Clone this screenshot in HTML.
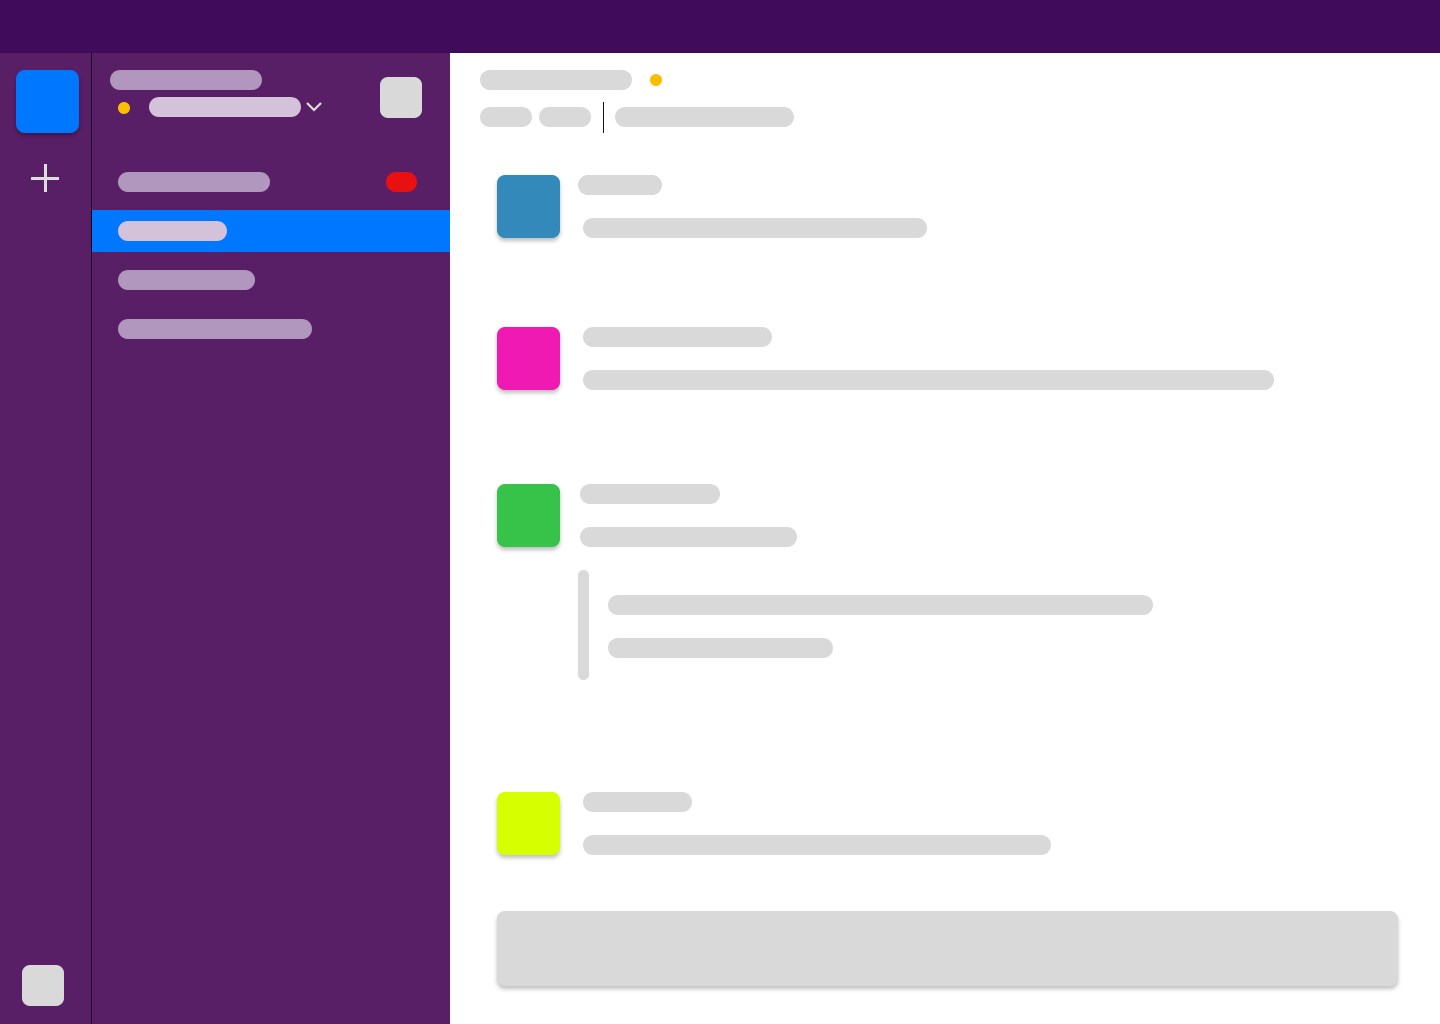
<!DOCTYPE html>
<html><head><meta charset="utf-8"><style>
*{margin:0;padding:0;box-sizing:border-box}
body{width:1440px;height:1024px;position:relative;overflow:hidden;background:#fff;font-family:"Liberation Sans",sans-serif}
div{position:absolute}
.p{height:20px;border-radius:10px;background:#d9d9d9}
.l{background:#b196be}
.w{background:#d4c1da}
.av{width:63px;height:63px;border-radius:8px;box-shadow:0 3px 4px rgba(0,0,0,.25)}
</style></head><body>
<div style="left:0;top:0;width:1440px;height:53px;background:#3f0b5a"></div>
<div style="left:0;top:53px;width:450px;height:971px;background:#591f66"></div>
<div style="left:91px;top:53px;width:1px;height:971px;background:#1a0520"></div>
<div style="left:16px;top:70px;width:63px;height:63px;border-radius:9px;background:#0077ff;box-shadow:0 3px 4px rgba(0,0,0,.3)"></div>
<div style="left:31px;top:177px;width:28px;height:3px;background:#ddd"></div>
<div style="left:44px;top:164px;width:3px;height:28px;background:#ddd"></div>
<div style="left:22px;top:965px;width:42px;height:41px;border-radius:8px;background:#d9d9d9"></div>

<div class="p l" style="left:110px;top:70px;width:152px"></div>
<div style="left:118px;top:102px;width:12px;height:12px;border-radius:50%;background:#fbbf00"></div>
<div class="p w" style="left:149px;top:97px;width:152px"></div>
<svg style="position:absolute;left:305px;top:101px" width="18" height="12"><path d="M2 2 L9 9 L16 2" stroke="#ddd" stroke-width="2.2" fill="none"/></svg>
<div style="left:380px;top:77px;width:42px;height:41px;border-radius:8px;background:#d9d9d9"></div>

<div class="p l" style="left:118px;top:172px;width:152px"></div>
<div class="p" style="left:386px;top:172px;width:31px;background:#e81010"></div>
<div style="left:92px;top:210px;width:358px;height:42px;background:#0077ff"></div>
<div class="p w" style="left:118px;top:221px;width:109px"></div>
<div class="p l" style="left:118px;top:270px;width:137px"></div>
<div class="p l" style="left:118px;top:319px;width:194px"></div>

<div class="p" style="left:480px;top:70px;width:152px"></div>
<div style="left:650px;top:74px;width:12px;height:12px;border-radius:50%;background:#fbbf00"></div>
<div class="p" style="left:480px;top:107px;width:52px"></div>
<div class="p" style="left:539px;top:107px;width:52px"></div>
<div style="left:603px;top:102px;width:1px;height:31px;background:#111"></div>
<div class="p" style="left:615px;top:107px;width:179px"></div>

<div class="av" style="left:497px;top:175px;background:#3289ba"></div>
<div class="p" style="left:578px;top:175px;width:84px"></div>
<div class="p" style="left:583px;top:218px;width:344px"></div>

<div class="av" style="left:497px;top:327px;background:#ef1ab1"></div>
<div class="p" style="left:583px;top:327px;width:189px"></div>
<div class="p" style="left:583px;top:370px;width:691px"></div>

<div class="av" style="left:497px;top:484px;background:#37c24a"></div>
<div class="p" style="left:580px;top:484px;width:140px"></div>
<div class="p" style="left:580px;top:527px;width:217px"></div>
<div style="left:578px;top:570px;width:11px;height:110px;border-radius:6px;background:#d9d9d9"></div>
<div class="p" style="left:608px;top:595px;width:545px"></div>
<div class="p" style="left:608px;top:638px;width:225px"></div>

<div class="av" style="left:497px;top:792px;background:#d6ff00"></div>
<div class="p" style="left:583px;top:792px;width:109px"></div>
<div class="p" style="left:583px;top:835px;width:468px"></div>

<div style="left:497px;top:911px;width:901px;height:75px;border-radius:8px;background:#d9d9d9;box-shadow:0 3px 4px rgba(0,0,0,.25)"></div>
</body></html>
